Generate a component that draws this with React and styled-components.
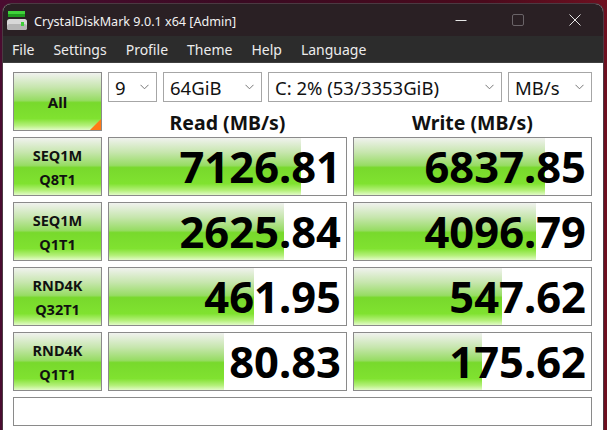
import React from 'react';
import styled, { createGlobalStyle } from 'styled-components';

const GlobalStyle = createGlobalStyle`
  html, body {
    margin: 0;
    padding: 0;
    height: 100%;
    overflow: hidden;
  }
  body {
    background: linear-gradient(90deg, #4a0c30 0%, #3a0a22 40%, #4a0a1c 80%, #6e1020 100%);
    font-family: "Noto Sans", "Liberation Sans", sans-serif;
  }
`;

const Window = styled.div`
  margin: 4px 0 0 3px;
  width: 600px;
  height: 440px;
  border-radius: 8px 8px 0 0;
  overflow: hidden;
  background: #ffffff;
  box-shadow: 0 0 0 1px #4b3a42;
`;

const TitleBar = styled.div`
  height: 32px;
  display: flex;
  align-items: center;
  background: #2a2024;
  color: #f2f2f2;
`;

const AppIcon = styled.svg`
  margin: 2px 7px 0 4px;
  flex-shrink: 0;
`;

const TitleText = styled.div`
  font-size: 12.6px;
  flex: 1;
  padding-top: 2px;
`;

const Controls = styled.div`
  display: flex;
  align-items: center;
  height: 100%;
`;

const ControlButton = styled.div`
  width: 57px;
  height: 100%;
  display: flex;
  align-items: center;
  justify-content: center;
`;

const MenuBar = styled.div`
  height: 26px;
  display: flex;
  align-items: center;
  background: #2c2c2c;
  border-bottom: 1px solid #3f3f3f;
  padding-left: 9px;
  gap: 19px;
`;

const MenuItem = styled.span`
  color: #ececec;
  font-size: 14px;
`;

const Body = styled.div`
  padding: 9px 10px 0 10px;
  display: grid;
  grid-template-columns: 89px 239px 239px;
  grid-template-rows: 30px 23px repeat(4, 59px) 29px;
  gap: 6px;
`;

const greenFill = `linear-gradient(180deg,
  #f0f2ee 0%,
  #c7e6ae 25%,
  #97dc64 48%,
  #78d92c 52%,
  #80e230 80%,
  #b4f07a 92%,
  #e2fbc8 100%)`;

const LabelButton = styled.div`
  box-sizing: border-box;
  border: 1px solid #8a8a8a;
  background: ${greenFill};
  display: flex;
  flex-direction: column;
  align-items: center;
  justify-content: center;
  font-weight: 700;
  font-size: ${(p) => (p.$big ? '15px' : '14.5px')};
  line-height: 24px;
  color: #111;
  position: relative;
  grid-row: ${(p) => p.$span || 'auto'};
`;

const Corner = styled.div`
  position: absolute;
  right: 0;
  bottom: 0;
  width: 0;
  height: 0;
  border-left: 11px solid transparent;
  border-bottom: 11px solid #ff7a16;
`;

const ComboRow = styled.div`
  grid-column: 2 / 4;
  display: flex;
  gap: 6px;
`;

const Combo = styled.div`
  box-sizing: border-box;
  width: ${(p) => p.$w}px;
  height: 30px;
  border: 1px solid #a6a6a6;
  background: #fff;
  display: flex;
  align-items: center;
  justify-content: space-between;
  padding: 0 7px 0 6px;
  font-size: 18.5px;
  color: #111;
`;

const Header = styled.div`
  display: flex;
  align-items: center;
  justify-content: center;
  font-weight: 700;
  font-size: 19.5px;
  color: #111;
  padding-top: 6px;
`;

const ValueCell = styled.div`
  box-sizing: border-box;
  border: 1px solid #8a8a8a;
  background: #fff;
  position: relative;
  display: flex;
  align-items: center;
  justify-content: flex-end;
  padding-right: 5px;
  overflow: hidden;
`;

const Bar = styled.div`
  position: absolute;
  left: 0;
  top: 0;
  bottom: 0;
  background: ${greenFill};
`;

const Value = styled.span`
  position: relative;
  font-weight: 700;
  font-size: 43.5px;
  color: #000;
  line-height: 1;
`;

const StatusBar = styled.div`
  grid-column: 1 / 4;
  box-sizing: border-box;
  border: 1px solid #8a8a8a;
  background: #fff;
`;

const Chevron = () => (
  <svg width="9" height="6" viewBox="0 0 9 6">
    <path d="M0.5 0.8 L4.5 4.8 L8.5 0.8" fill="none" stroke="#777" strokeWidth="1" />
  </svg>
);

const rows = [
  { a: 'SEQ1M', b: 'Q8T1', read: 7126.81, write: 6837.85 },
  { a: 'SEQ1M', b: 'Q1T1', read: 2625.84, write: 4096.79 },
  { a: 'RND4K', b: 'Q32T1', read: 461.95, write: 547.62 },
  { a: 'RND4K', b: 'Q1T1', read: 80.83, write: 175.62 },
];

// CrystalDiskMark draws bars on a log scale (6 decades)
const barWidth = (v) => `${Math.max(0, Math.min(100, ((Math.log10(v) + 1) / 6) * 100))}%`;

const menus = ['File', 'Settings', 'Profile', 'Theme', 'Help', 'Language'];

function Cell({ value }) {
  return (
    <ValueCell>
      <Bar style={{ width: barWidth(value) }} />
      <Value>{value.toFixed(2)}</Value>
    </ValueCell>
  );
}

export default function App() {
  return (
    <>
      <GlobalStyle />
      <Window>
        <TitleBar>
          <AppIcon width="20" height="20" viewBox="0 0 20 20">
            <rect x="1" y="0" width="17" height="3" fill="#3fd23a" />
            <rect x="1" y="3" width="17" height="3" fill="#1f9a1e" />
            <rect x="0" y="8" width="20" height="11" rx="2.5" fill="#d8d8d8" />
            <rect x="0" y="13" width="20" height="6" rx="2.5" fill="#b5b5b5" />
            <rect x="14" y="11" width="3" height="4" fill="#3fcf3a" />
          </AppIcon>
          <TitleText>CrystalDiskMark 9.0.1 x64 [Admin]</TitleText>
          <Controls>
            <ControlButton>
              <svg width="12" height="12" viewBox="0 0 12 12">
                <path d="M0.5 6.5 H11.5" stroke="#e6e6e6" strokeWidth="1" />
              </svg>
            </ControlButton>
            <ControlButton>
              <svg width="12" height="12" viewBox="0 0 12 12">
                <rect x="0.5" y="0.5" width="11" height="11" rx="1.5" fill="none" stroke="#6a6468" strokeWidth="1" />
              </svg>
            </ControlButton>
            <ControlButton>
              <svg width="12" height="12" viewBox="0 0 12 12">
                <path d="M0.5 0.5 L11.5 11.5 M11.5 0.5 L0.5 11.5" stroke="#e6e6e6" strokeWidth="1" />
              </svg>
            </ControlButton>
          </Controls>
        </TitleBar>
        <MenuBar>
          {menus.map((m) => (
            <MenuItem key={m}>{m}</MenuItem>
          ))}
        </MenuBar>
        <Body>
          <LabelButton $span="1 / 3" $big>
            All
            <Corner />
          </LabelButton>
          <ComboRow>
            <Combo $w={49}>9<Chevron /></Combo>
            <Combo $w={99}>64GiB<Chevron /></Combo>
            <Combo $w={234}>C: 2% (53/3353GiB)<Chevron /></Combo>
            <Combo $w={84}>MB/s<Chevron /></Combo>
          </ComboRow>
          <Header>Read (MB/s)</Header>
          <Header>Write (MB/s)</Header>
          {rows.map((r) => (
            <React.Fragment key={r.a + r.b}>
              <LabelButton>
                <span>{r.a}</span>
                <span>{r.b}</span>
              </LabelButton>
              <Cell value={r.read} />
              <Cell value={r.write} />
            </React.Fragment>
          ))}
          <StatusBar />
        </Body>
      </Window>
    </>
  );
}
